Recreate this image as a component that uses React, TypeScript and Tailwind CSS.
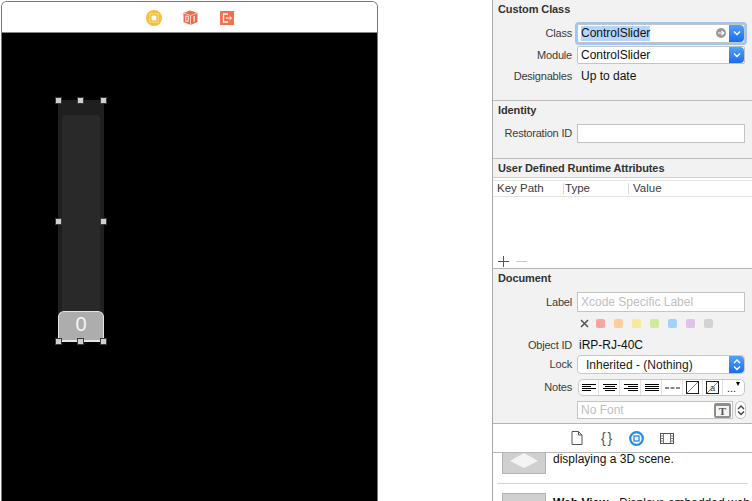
import React from "react";

const font = { fontFamily: '"Liberation Sans", Arial, sans-serif' };

function Handle({ cls }: { cls: string }) {
  return <div className={`absolute w-[7px] h-[7px] bg-[#cfcfcf] border border-[#3a3a3a] ${cls}`} />;
}

function Chevron({ up }: { up?: boolean }) {
  return (
    <svg width="10" height="6" viewBox="0 0 10 6">
      <path d={up ? "M2 5 L5 2 L8 5" : "M2 1.5 L5 4.5 L8 1.5"} fill="none" stroke="currentColor" strokeWidth="1.4" />
    </svg>
  );
}

function Stepper() {
  return (
    <div className="w-[15px] self-stretch rounded-r-[4px] bg-gradient-to-b from-[#4fa3fb] to-[#1a6cf0] flex flex-col items-center justify-center text-white">
      <Chevron />
    </div>
  );
}

function Section({ title }: { title: string }) {
  return <div className="pl-[5px] text-[11px] font-bold leading-[13px] text-[#333] tracking-[-0.1px]">{title}</div>;
}

function Row({ label, h, mt, children }: { label: string; h: number; mt: number; children: React.ReactNode }) {
  return (
    <div className="flex items-center" style={{ height: h, marginTop: mt }}>
      <div className="w-[79px] text-right text-[11px] tracking-[-0.2px] text-[#3c3c3c] leading-none shrink-0">{label}</div>
      <div className="ml-[5px] flex-1 min-w-0 flex items-center">{children}</div>
    </div>
  );
}

function Align({ widths }: { widths: number[][] }) {
  return (
    <svg width="17" height="8" viewBox="0 0 17 8" className="text-black">
      {widths.map(([x, w], i) => (
        <rect key={i} x={x} y={i * 2} width={w} height="1" fill="currentColor" />
      ))}
    </svg>
  );
}

function Seg({ children, w, last }: { children: React.ReactNode; w: number; last?: boolean }) {
  return (
    <div className={`h-full flex items-center justify-center ${last ? "" : "border-r border-[#e2e2e2]"}`} style={{ width: w }}>
      {children}
    </div>
  );
}

function Slashed({ letter }: { letter?: boolean }) {
  return (
    <svg width="13" height="13" viewBox="0 0 14 14">
      <rect x="0.5" y="0.5" width="13" height="13" fill="#fff" stroke="#111" />
      {letter && <text x="7" y="11" textAnchor="middle" fontSize="10" fill="#444" style={font}>a</text>}
      <line x1="1" y1="13" x2="13" y2="1" stroke="#f0404a" strokeWidth="1" />
    </svg>
  );
}

const colors = ["#fba3a3", "#fccf9a", "#f8ea9c", "#d2e99c", "#a2d2fa", "#e0c2e9", "#d2d2d2"];

export default function App() {
  return (
    <div className="relative flex w-[752px] h-[501px] overflow-hidden bg-white" style={font}>
      {/* Canvas */}
      <div className="ml-px mt-px w-[377px] h-[500px] flex flex-col border border-b-0 border-[#777] rounded-t-[6px] overflow-hidden shrink-0">
        <div className="h-[30px] shrink-0 bg-white border-b border-[#858585] box-content flex items-center justify-center">
          <div className="flex items-center gap-[21px] mt-px">
            <svg width="16" height="16" viewBox="0 0 16 16">
              <circle cx="8" cy="8" r="8" fill="#f7bd3c" />
              <rect x="3" y="3" width="10" height="10" fill="#fbd56e" />
              <rect x="4.5" y="4.5" width="7" height="7" fill="#f2ae22" />
              <rect x="5.5" y="5.5" width="5" height="5" fill="#fff" />
            </svg>
            <svg width="15" height="15" viewBox="0 0 15 15">
              <path d="M7 0.5 L14.5 3 V12 L7.5 15 L0.5 12 V3 Z" fill="#f2694a" />
              <path d="M0.5 3 L7.5 5.5 L14.5 3 M7.5 5.5 V15" fill="none" stroke="#fbd3c8" strokeWidth="0.9" />
              <rect x="2.8" y="6.2" width="2.4" height="5" fill="none" stroke="#fff" strokeWidth="0.9" />
              <rect x="10.5" y="6" width="1.2" height="5.6" fill="#fff" />
            </svg>
            <svg width="14" height="14" viewBox="0 0 14 14" className="ml-[1px]">
              <rect width="14" height="14" fill="#f4704a" />
              <path d="M8 3 H3.5 V11 H8" fill="none" stroke="#fff" strokeWidth="1.3" />
              <path d="M6 7 H11.5 M9.5 5.2 L11.5 7 L9.5 8.8" fill="none" stroke="#fff" strokeWidth="1" />
            </svg>
          </div>
        </div>
        <div className="flex-1 bg-black pl-[56px] pt-[67px]">
          <div className="relative w-[46px] h-[242px] bg-[#1f1f1f]">
            <div className="absolute left-[4px] right-[4px] top-[15px] bottom-[31px] bg-[#292929] rounded-t-[4px]" />
            <div className="absolute left-0 right-0 bottom-0 h-[31px] bg-[#adadad] border border-b-2 border-[#e4e4e4] rounded-t-[6px] rounded-b-[2px] flex items-center justify-center pb-[5px] text-[#f4f4f4] text-[20px] leading-none">
              0
            </div>
            <Handle cls="left-[-3px] top-[-3px]" />
            <Handle cls="left-[19px] top-[-3px]" />
            <Handle cls="right-[-3px] top-[-3px]" />
            <Handle cls="left-[-3px] top-[118px]" />
            <Handle cls="right-[-3px] top-[118px]" />
            <Handle cls="left-[-3px] bottom-[-3px]" />
            <Handle cls="left-[19px] bottom-[-3px]" />
            <Handle cls="right-[-3px] bottom-[-3px]" />
          </div>
        </div>
      </div>

      {/* Inspector */}
      <div className="ml-auto w-[260px] h-[501px] flex flex-col border-l border-[#a8a8a8] bg-[#f2f2f2] shrink-0">
        {/* Custom Class */}
        <div className="h-[100px] shrink-0 border-b border-[#bcbcbc] box-content">
          <div className="pt-[3px]"><Section title="Custom Class" /></div>
          <Row label="Class" h={20} mt={7}>
            <div className="w-[168px] h-[19px] flex bg-white border border-[#c4c4c4] rounded-[2px] shadow-[0_0_0_2px_#9cc7f5]">
              <div className="flex-1 flex items-center pl-[3px] relative">
                <span className="bg-[#b5d5fd] text-[12px] text-[#111] leading-[15px]">ControlSlider</span>
                <span className="absolute right-[3px] top-[3px] w-[10px] h-[10px] rounded-full bg-[#9a9a9a] flex items-center justify-center">
                  <svg width="8" height="8" viewBox="0 0 8 8"><path d="M1 4 H6.5 M4.5 2 L6.8 4 L4.5 6" fill="none" stroke="#fff" strokeWidth="1.2" /></svg>
                </span>
              </div>
              <Stepper />
            </div>
          </Row>
          <Row label="Module" h={18} mt={3}>
            <div className="w-[168px] h-[18px] flex bg-white border border-[#c4c4c4] rounded-[2px]">
              <div className="flex-1 flex items-center pl-[3px] text-[12px] text-[#111]">ControlSlider</div>
              <Stepper />
            </div>
          </Row>
          <Row label="Designables" h={14} mt={5}>
            <span className="pl-[4px] text-[12px] text-[#111] leading-none">Up to date</span>
          </Row>
        </div>

        {/* Identity */}
        <div className="h-[57px] shrink-0 border-b border-[#bcbcbc] box-content">
          <div className="pt-[3px]"><Section title="Identity" /></div>
          <Row label="Restoration ID" h={19} mt={7}>
            <div className="w-[168px] h-[19px] bg-white border border-[#c4c4c4]" />
          </Row>
        </div>

        {/* Runtime attributes */}
        <div className="h-[109px] shrink-0 border-b border-[#b4b4b4] box-content flex flex-col">
          <div className="h-[15px] shrink-0 pt-[3px] border-b border-[#d0d0d0] box-content"><Section title="User Defined Runtime Attributes" /></div>
          <div className="flex-1 bg-white flex flex-col">
            <div className="mt-[2px] h-[15px] border-t border-b border-[#e4e4e4] box-content flex items-center text-[11.5px] text-[#3c3c3c] leading-none pl-[4px]">
              <span className="w-[67px] border-r border-[#d8d8d8]">Key Path</span>
              <span className="w-[65px] pl-[1px] border-r border-[#d8d8d8]">Type</span>
              <span className="pl-[4px]">Value</span>
            </div>
            <div className="mt-auto mb-[1px] h-[12px] pl-[5px] flex items-center gap-[7px]">
              <svg width="11" height="11" viewBox="0 0 11 11"><path d="M5.5 0 V11 M0 5.5 H11" stroke="#555" strokeWidth="1" /></svg>
              <svg width="11" height="11" viewBox="0 0 11 11"><path d="M0 5.5 H11" stroke="#c8c8c8" strokeWidth="1" /></svg>
            </div>
          </div>
        </div>

        {/* Document */}
        <div className="h-[154px] shrink-0 border-b border-[#b4b4b4] box-content">
          <div className="pt-[3px]"><Section title="Document" /></div>
          <Row label="Label" h={20} mt={7}>
            <div className="w-[168px] h-[20px] bg-white border border-[#c4c4c4] flex items-center pl-[3px] text-[12px] text-[#c0c0c0]">Xcode Specific Label</div>
          </Row>
          <div className="flex items-center h-[12px] mt-[5px] pl-[87px] gap-[9px]">
            <svg width="9" height="9" viewBox="0 0 9 9" className="mr-[-2px]"><path d="M1 1 L8 8 M8 1 L1 8" stroke="#555" strokeWidth="1.6" /></svg>
            {colors.map((c) => (
              <div key={c} className="w-[9px] h-[9px] rounded-[2px]" style={{ backgroundColor: c }} />
            ))}
          </div>
          <Row label="Object ID" h={14} mt={9}>
            <span className="pl-[2px] text-[12px] text-[#111] leading-none">iRP-RJ-40C</span>
          </Row>
          <Row label="Lock" h={19} mt={3}>
            <div className="w-[168px] h-[19px] flex bg-white border border-[#c8c8c8] rounded-[4px]">
              <div className="flex-1 flex items-center pl-[8px] text-[12px] text-[#222]">Inherited - (Nothing)</div>
              <div className="w-[15px] rounded-r-[4px] bg-gradient-to-b from-[#4fa3fb] to-[#1a6cf0] flex flex-col items-center justify-center gap-[1px] text-white">
                <Chevron up />
                <Chevron />
              </div>
            </div>
          </Row>
          <Row label="Notes" h={17} mt={5}>
            <div className="w-[167px] ml-px h-[17px] flex bg-white border border-[#c8c8c8] rounded-[5px] overflow-hidden">
              <Seg w={20}><Align widths={[[2, 14], [2, 9], [2, 14], [2, 9]]} /></Seg>
              <Seg w={21}><Align widths={[[2, 14], [4, 10], [2, 14], [4, 10]]} /></Seg>
              <Seg w={21}><Align widths={[[2, 14], [6, 10], [2, 14], [6, 10]]} /></Seg>
              <Seg w={21}><Align widths={[[2, 14], [2, 14], [2, 14], [2, 14]]} /></Seg>
              <Seg w={21}>
                <svg width="15" height="2" viewBox="0 0 15 2"><path d="M0 1 H15" stroke="#111" strokeWidth="1" strokeDasharray="4 1.5" /></svg>
              </Seg>
              <Seg w={20}><Slashed /></Seg>
              <Seg w={20}><Slashed letter /></Seg>
              <Seg w={21} last>
                <span className="relative text-[11px] leading-none text-[#222] mt-[1px] pr-[4px]">
                  ...
                  <span className="absolute right-0 top-[-1px] w-0 h-0 border-x-[2.5px] border-x-transparent border-t-[4px] border-t-black" />
                </span>
              </Seg>
            </div>
          </Row>
          <div className="flex items-center h-[18px] mt-[5px] pl-[84px]">
            <div className="w-[156px] h-[18px] bg-white border border-[#c4c4c4] flex items-center justify-between pl-[3px] pr-px text-[12px] text-[#c0c0c0]">
              No Font
              <span className="w-[17px] h-[15px] rounded-[2px] bg-[#8f8f8f] flex items-center justify-center">
                <span className="w-[13px] h-[10px] mt-[2px] bg-[#f4f4f4] flex items-center justify-center text-[#555] text-[11px] font-bold leading-none" style={{ fontFamily: '"Liberation Serif", serif' }}>T</span>
              </span>
            </div>
            <div className="ml-[2px] w-[11px] h-[18px] bg-white border border-[#c4c4c4] rounded-[5px] flex flex-col items-center justify-center text-[#444]">
              <Chevron up />
              <Chevron />
            </div>
          </div>
        </div>

        {/* Tabs */}
        <div className="h-[28px] shrink-0 bg-white border-b border-[#b8b8b8] box-content flex items-center pl-[78px] gap-[16px]">
          <svg width="12" height="14" viewBox="0 0 12 14"><path d="M1 0.5 H7.5 L11 4 V13.5 H1 Z M7.5 0.5 V4 H11" fill="none" stroke="#555" /></svg>
          <span className="text-[14px] leading-none text-[#555] w-[14px] text-center whitespace-nowrap tracking-[-1px]">{"{ }"}</span>
          <svg width="15" height="15" viewBox="0 0 15 15">
            <circle cx="7.5" cy="7.5" r="6.3" fill="none" stroke="#1d8bf1" strokeWidth="2.2" />
            <rect x="5" y="5" width="5" height="5" fill="none" stroke="#1d8bf1" strokeWidth="1.3" />
          </svg>
          <svg width="14" height="11" viewBox="0 0 14 11">
            <rect x="0.5" y="0.5" width="13" height="10" fill="none" stroke="#555" />
            <path d="M3.5 1 V10 M10.5 1 V10 M1 3 H3 M1 5.5 H3 M1 8 H3 M11 3 H13 M11 5.5 H13 M11 8 H13" stroke="#555" strokeWidth="0.8" />
          </svg>
        </div>

        {/* Library */}
        <div className="flex-1 min-h-0 overflow-hidden bg-white relative">
          <div className="h-[31px] border-b border-[#d4d4d4] mx-[4px] relative">
            <div className="absolute left-[5px] top-[-1px] w-[44px] h-[22px] bg-[#d0d0d0] border border-t-0 border-[#b4b4b4] flex items-start justify-center overflow-hidden">
              <svg width="32" height="16" viewBox="0 0 32 16"><path d="M16 1 L30 9 L16 16 L2 9 Z" fill="#f4f4f4" /></svg>
            </div>
            <div className="absolute left-[56px] top-0 text-[12px] text-[#111] leading-[13px]">displaying a 3D scene.</div>
          </div>
          <div className="mx-[4px] mt-[9px] relative">
            <div className="absolute left-[5px] top-0 w-[44px] h-[30px] bg-[#d0d0d0] border border-[#b4b4b4]" />
            <div className="absolute left-[56px] top-[4px] text-[12px] text-[#111] leading-[13px] whitespace-nowrap"><b>Web View</b> - Displays embedded web</div>
          </div>
        </div>
      </div>
    </div>
  );
}
